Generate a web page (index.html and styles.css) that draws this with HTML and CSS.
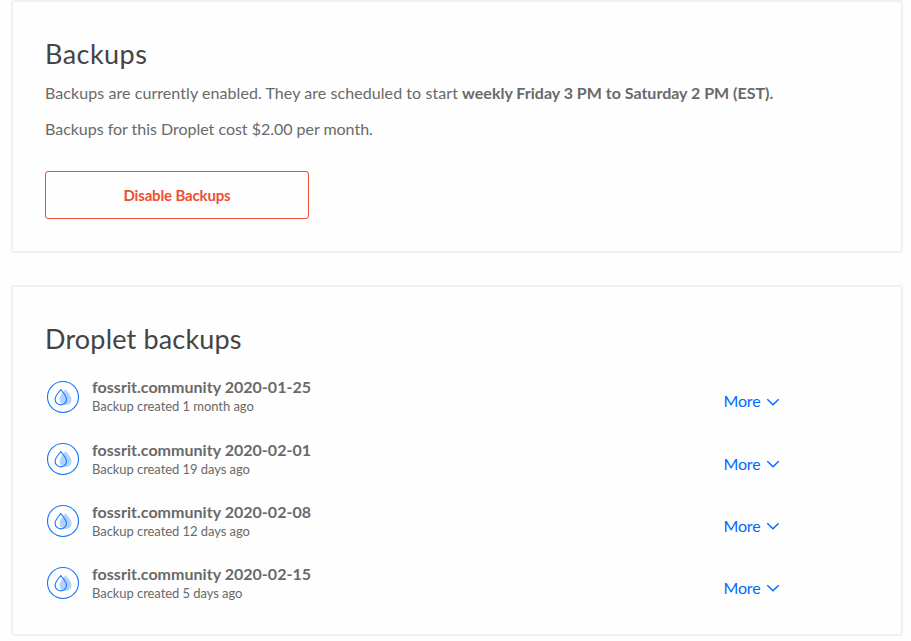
FILE: index.html
```html
<!DOCTYPE html>
<html lang="en">
<head>
<meta charset="utf-8">
<title>Backups</title>
<link rel="stylesheet" href="styles.css">
</head>
<body>
<svg class="defs" aria-hidden="true">
  <symbol id="droplet" viewBox="0 0 34 34">
    <circle cx="17" cy="17" r="15.5" fill="#fff" stroke="#1673ff" stroke-width="1.1"/>
    <path d="M19.5 9.3C21.5 11.8 25.6 15.8 25.6 19.2A6 6 0 0 1 13.6 19.2C13.6 15.8 17.5 11.8 19.5 9.3Z" fill="#b2d2ff"/>
    <path d="M14.8 9.6C16.8 12.2 20.5 15.8 20.5 19.2A5.7 5.7 0 0 1 9.1 19.2C9.1 15.8 12.8 12.2 14.8 9.6Z" fill="none" stroke="#1673ff" stroke-width="1.1"/>
  </symbol>
  <symbol id="chevron" viewBox="0 0 14 8">
    <path d="M1.3 1.2L7 6.8L12.7 1.2" fill="none" stroke="#0069ff" stroke-width="1.4"/>
  </symbol>
</svg>
<main class="page">
  <section class="card">
    <h2 class="heading">Backups</h2>
    <p class="text"><span class="lead">Backups are currently enabled. They are scheduled to start </span><strong class="schedule">weekly Friday 3 PM to Saturday 2 PM (EST).</strong></p>
    <p class="text cost">Backups for this Droplet cost $2.00 per month.</p>
    <button class="disable">Disable Backups</button>
  </section>
  <section class="card list-card">
    <h2 class="heading wide">Droplet backups</h2>
    <ul class="list">
      <li class="row"><svg class="icon"><use href="#droplet"/></svg><div class="info"><div class="name">fossrit.community 2020-01-25</div><div class="meta">Backup created 1 month ago</div></div><a class="more">More <svg class="chevron"><use href="#chevron"/></svg></a></li>
      <li class="row"><svg class="icon"><use href="#droplet"/></svg><div class="info"><div class="name">fossrit.community 2020-02-01</div><div class="meta">Backup created 19 days ago</div></div><a class="more">More <svg class="chevron"><use href="#chevron"/></svg></a></li>
      <li class="row"><svg class="icon"><use href="#droplet"/></svg><div class="info"><div class="name">fossrit.community 2020-02-08</div><div class="meta">Backup created 12 days ago</div></div><a class="more">More <svg class="chevron"><use href="#chevron"/></svg></a></li>
      <li class="row"><svg class="icon"><use href="#droplet"/></svg><div class="info"><div class="name">fossrit.community 2020-02-15</div><div class="meta">Backup created 5 days ago</div></div><a class="more">More <svg class="chevron"><use href="#chevron"/></svg></a></li>
    </ul>
  </section>
</main>
</body>
</html>
```
FILE: styles.css
```css
* { box-sizing: border-box; }
body { margin: 0; background: #fefefe; color: #696969; font: 16px/24px Lato, "Open Sans", sans-serif; }
.defs { position: absolute; width: 0; height: 0; }
.page { width: 892px; margin-left: 11px; }
.card { height: 253px; padding: 36px 32px 0; border: 2px solid #f1f1f1; border-radius: 3px; }
.list-card { height: 351px; margin-top: 32px; }
.heading { margin: 0; font-size: 27px; font-weight: 400; line-height: 32px; letter-spacing: 0.45px; color: #444; }
.heading.wide { letter-spacing: 0.17px; }
.text { margin: 11px 0 0; white-space: nowrap; }
.text.cost { margin-top: 12px; letter-spacing: -0.02px; }
.lead { letter-spacing: 0.07px; }
.schedule { font-weight: 700; letter-spacing: 0; }
.disable { display: block; width: 264px; height: 48px; margin: 30px 0 0; padding: 0; border: 1px solid #ed4f32; border-radius: 3px; background: transparent; color: #ed4f32; font: 700 15px/24px Lato, sans-serif; letter-spacing: -0.15px; }
.list { margin: 21px 0 0; padding: 0; list-style: none; }
.row { display: flex; height: 62.2px; }
.icon { width: 34px; height: 34px; margin: 3.6px 11.6px 0 1.4px; }
.info { width: 631.6px; padding-top: 0.4px; white-space: nowrap; }
.name { font-weight: 700; line-height: 22px; letter-spacing: 0.03px; }
.meta { font-size: 13px; line-height: 17.8px; letter-spacing: -0.06px; }
.more { display: flex; align-items: center; height: 24px; margin-top: 13.4px; color: #0069ff; letter-spacing: -0.2px; }
.chevron { width: 14px; height: 8px; margin: 1px 0 0 5.6px; }
```
